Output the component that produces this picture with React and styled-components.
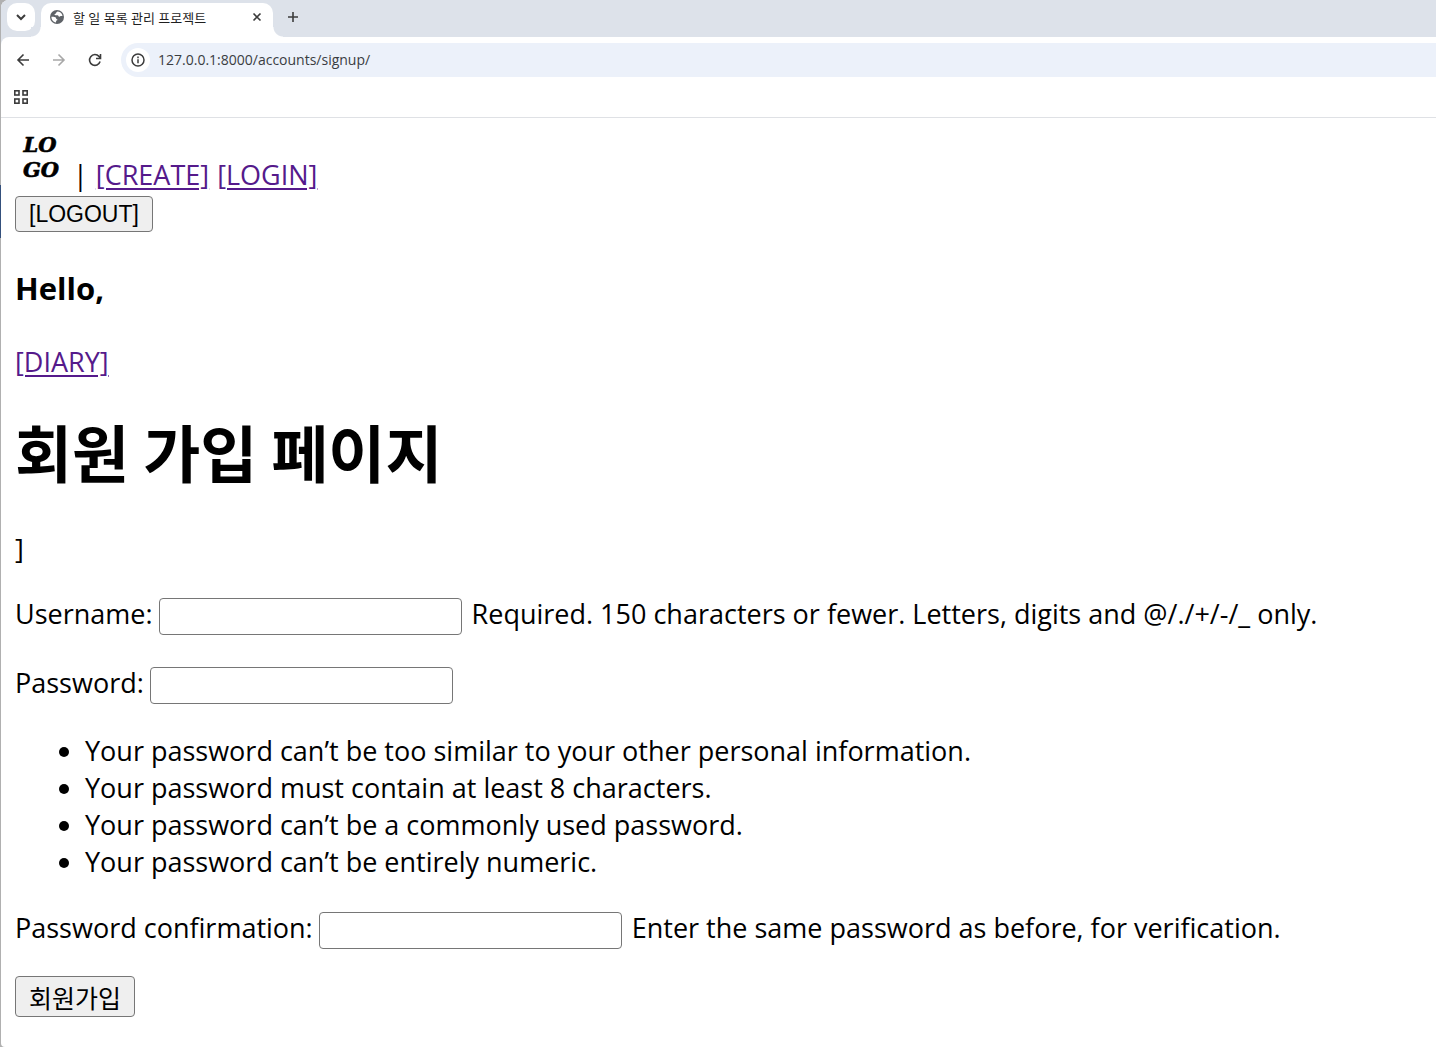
import React from "react";
import styled, { createGlobalStyle } from "styled-components";

const GlobalStyle = createGlobalStyle`
  *, *::before, *::after { box-sizing: border-box; }
  body {
    margin: 0;
    background: #fff;
    color: #000;
    font-family: "Open Sans", "Noto Sans CJK KR", sans-serif;
  }
`;

const Desktop = styled.div`
  min-height: 100vh;
  padding-left: 1px;
  background: linear-gradient(#b0b0b0 185px, #34507c 185px, #34507c 238px, #b0b0b0 238px);
`;

const Window = styled.div`
  display: flex;
  flex-direction: column;
  min-height: 100vh;
  overflow: hidden;
  background: #fff;
  border-radius: 8px 0 0 4px;
`;

const TabStrip = styled.header`
  display: flex;
  align-items: flex-start;
  height: 37px;
  padding: 3px 6px 0;
  background: #dde2ea;
`;

const IconButton = styled.button`
  display: flex;
  align-items: center;
  justify-content: center;
  flex: none;
  width: ${(p) => p.$size || 28}px;
  height: ${(p) => p.$size || 28}px;
  padding: 0;
  border: 0;
  border-radius: ${(p) => p.$radius || 14}px;
  background: ${(p) => (p.$filled ? "#fff" : "transparent")};
  color: ${(p) => (p.disabled ? "#a8a8a8" : "#3c3c3c")};
`;

const Tab = styled.div`
  position: relative;
  display: flex;
  align-items: center;
  width: 232px;
  height: 34px;
  margin: 0 6px;
  padding: 0 6px 6px 9px;
  background: #fff;
  border-radius: 10px 10px 0 0;

  &::before,
  &::after {
    content: "";
    position: absolute;
    bottom: 0;
    width: 10px;
    height: 10px;
  }
  &::before {
    left: -10px;
    background: radial-gradient(circle at 0 0, #dde2ea 9px, #fff 10px);
  }
  &::after {
    right: -10px;
    background: radial-gradient(circle at 100% 0, #dde2ea 9px, #fff 10px);
  }
`;

const TabTitle = styled.span`
  flex: 1;
  margin-left: 9px;
  padding-top: 2px;
  color: #1f1f1f;
  font-size: 13px;
  line-height: 18px;
  white-space: nowrap;
`;

const Toolbar = styled.div`
  display: flex;
  align-items: center;
  gap: 8px;
  height: 46px;
  padding-left: 8px;
`;

const ToolbarWrap = styled.div`
  background: #fff;
  border-bottom: 1px solid #dfe1e5;
  border-top-left-radius: 8px;
`;

const Chrome = styled.div`
  background: #dde2ea;
`;

const AddressBar = styled.div`
  display: flex;
  align-items: center;
  flex: 1;
  height: 34px;
  margin-left: 4px;
  padding-left: 5px;
  background: #ecf1fa;
  border-radius: 17px 0 0 17px;
`;

const AddressInput = styled.input`
  flex: 1;
  min-width: 0;
  padding: 0 8px;
  border: 0;
  outline: 0;
  background: transparent;
  color: #3a3d42;
  font: 14px/20px "Open Sans", sans-serif;
`;

const BookmarkBar = styled.div`
  display: flex;
  align-items: center;
  height: 34px;
  padding: 0 6px 6px;
`;

const Page = styled.main`
  padding: 14px;
  font-size: 27px;
  line-height: 37px;
`;

const Nav = styled.nav`
  display: flex;
  align-items: flex-end;
  gap: 8px;
  height: 64px;
  padding-bottom: 3px;
`;

const LogoLink = styled.a`
  align-self: flex-start;
  width: 50px;
  height: 56px;
`;

const TextLink = styled.a`
  color: #551a8b;
  text-decoration: underline;
  text-decoration-thickness: 2px;
  text-underline-offset: 3px;
`;

const Button = styled.button`
  display: block;
  height: ${(p) => p.$height}px;
  padding: 0 13px;
  border: 1px solid #767676;
  border-radius: 4px;
  background: #efefef;
  color: #000;
  font-family: ${(p) => p.$font}, "Noto Sans CJK KR", sans-serif;
  font-size: ${(p) => p.$fontSize}px;
  line-height: 32px;
`;

const Greeting = styled.h3`
  margin: 38px 0 36px;
  font-size: 31px;
  line-height: 37px;
`;

const Title = styled.h1`
  margin: 32px 0 40px;
  font-family: "Noto Sans CJK KR", sans-serif;
  font-size: 62px;
  font-weight: 700;
  line-height: 78px;
`;

const Paragraph = styled.p`
  margin: 0;
`;

const Form = styled.form`
  margin-top: 28px;
`;

const Field = styled.div`
  display: flex;
  align-items: flex-start;
  gap: 6px;
  margin-bottom: ${(p) => p.$after}px;
  white-space: nowrap;
`;

const TextInput = styled.input`
  width: 303px;
  height: 37px;
  margin: 3px 4px 0 0;
  padding: 2px 4px;
  border: 1px solid #767676;
  border-radius: 4px;
  background: #fff;
  font: 24px "Open Sans", sans-serif;
`;

const Hints = styled.ul`
  margin: 0 0 29px;
  padding-left: 70px;
`;

const Globe = () => (
  <svg width="14" height="14" viewBox="0 0 14 14" aria-hidden="true">
    <circle cx="7" cy="7" r="7" fill="#5f6368" />
    <path
      d="M7.8 1.5c-.9.5-1.7.7-1.7 1.6 0 .8-.8.7-1.4 1-.4.3 0 1.1.7 1.1h2.3c.8 0 .7 1.5 1.5 1.6.9.1 1.1-.7 2-.7h1.3c-.1-2.3-2-4.2-4.7-4.6zM1.4 6.8c1.5-.1 3.9 0 4.4.8.4.7.2 1.6 1.1 1.7 1 .2.5 1.1-.3 1.2-.7.1-.3 1-.7 1.9C3.2 12.2 1.3 9.6 1.4 6.8z"
      fill="#fff"
    />
  </svg>
);

const Stroke = ({ d, size = 16, width = 1.6, children }) => (
  <svg
    width={size}
    height={size}
    viewBox={`0 0 ${size} ${size}`}
    fill="none"
    stroke="currentColor"
    strokeWidth={width}
    aria-hidden="true"
  >
    {d && <path d={d} />}
    {children}
  </svg>
);

const Logo = () => (
  <svg width="50" height="56" viewBox="0 0 50 56" role="img" aria-label="LOGO">
    <g
      fontFamily="DejaVu Serif, serif"
      fontSize="21"
      fontWeight="bold"
      fontStyle="italic"
      textAnchor="middle"
      stroke="#000"
      strokeWidth="0.6"
    >
      <text x="25" y="20">LO</text>
      <text x="26" y="45">GO</text>
    </g>
  </svg>
);

const rules = [
  "Your password can’t be too similar to your other personal information.",
  "Your password must contain at least 8 characters.",
  "Your password can’t be a commonly used password.",
  "Your password can’t be entirely numeric.",
];

export default function App() {
  return (
    <Desktop>
      <GlobalStyle />
      <Window>
        <Chrome>
          <TabStrip>
            <IconButton $filled $radius={10} aria-label="Search tabs">
              <Stroke width={2} d="M4 6l4 4 4-4" />
            </IconButton>
            <Tab>
              <Globe />
              <TabTitle>할 일 목록 관리 프로젝트</TabTitle>
              <IconButton $size={20} aria-label="Close tab">
                <Stroke d="M4.500 4.500l7 7M11.500 4.500l-7 7" />
              </IconButton>
            </Tab>
            <IconButton aria-label="New tab">
              <Stroke d="M8 3v10M3 8h10" />
            </IconButton>
          </TabStrip>
          <ToolbarWrap>
            <Toolbar>
              <IconButton aria-label="Back">
                <Stroke d="M14 8H3M8.500 2.500L3 8l5.500 5.500" />
              </IconButton>
              <IconButton disabled aria-label="Forward">
                <Stroke d="M2 8h11M7.500 2.500L13 8l-5.500 5.500" />
              </IconButton>
              <IconButton aria-label="Reload">
                <Stroke d="M13.100 9.600A5.400 5.400 0 1 1 12 4.400L13.500 6M13.500 2v4.500H9" />
              </IconButton>
              <AddressBar>
                <IconButton $filled $size={24} aria-label="Site information">
                  <Stroke width={1.5}>
                    <circle cx="8" cy="8" r="6" />
                    <path d="M8 7.300v4M8 4.600v1.600" />
                  </Stroke>
                </IconButton>
                <AddressInput aria-label="Address" defaultValue="127.0.0.1:8000/accounts/signup/" />
              </AddressBar>
            </Toolbar>
            <BookmarkBar>
              <IconButton aria-label="Apps">
                <Stroke>
                  <rect x="1.800" y="1.800" width="4.200" height="4.200" />
                  <rect x="10" y="1.800" width="4.200" height="4.200" />
                  <rect x="1.800" y="10" width="4.200" height="4.200" />
                  <rect x="10" y="10" width="4.200" height="4.200" />
                </Stroke>
              </IconButton>
            </BookmarkBar>
          </ToolbarWrap>
        </Chrome>
        <Page>
          <Nav>
            <LogoLink href="#home"><Logo /></LogoLink>
            <span>|</span>
            <TextLink href="#create">[CREATE]</TextLink>
            <TextLink href="#login">[LOGIN]</TextLink>
          </Nav>
          <Button type="button" $height={36} $fontSize={23} $font='"Liberation Sans"'>
            [LOGOUT]
          </Button>
          <Greeting>Hello,</Greeting>
          <TextLink href="#diary">[DIARY]</TextLink>
          <Title>회원 가입 페이지</Title>
          <Paragraph>]</Paragraph>
          <Form onSubmit={(e) => e.preventDefault()}>
            <Field $after={29}>
              <label htmlFor="username">Username:</label>
              <TextInput id="username" type="text" />
              <span>Required. 150 characters or fewer. Letters, digits and @/./+/-/_ only.</span>
            </Field>
            <Field $after={28}>
              <label htmlFor="password">Password:</label>
              <TextInput id="password" type="password" />
            </Field>
            <Hints>
              {rules.map((rule) => (
                <li key={rule}>{rule}</li>
              ))}
            </Hints>
            <Field $after={27}>
              <label htmlFor="confirmation">Password confirmation:</label>
              <TextInput id="confirmation" type="password" />
              <span>Enter the same password as before, for verification.</span>
            </Field>
            <Button type="submit" $height={41} $fontSize={25} $font='"Noto Sans CJK KR"'>
              회원가입
            </Button>
          </Form>
        </Page>
      </Window>
    </Desktop>
  );
}
